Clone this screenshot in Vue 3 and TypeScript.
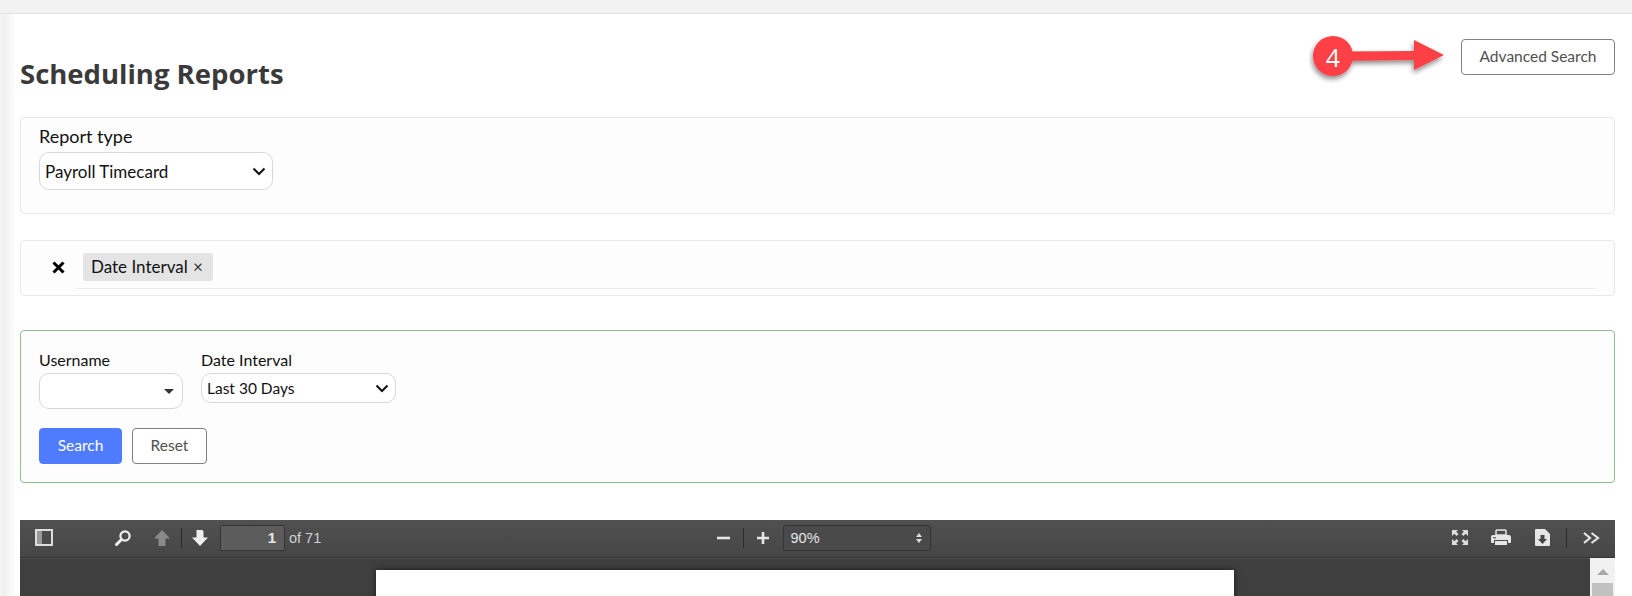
<script setup lang="ts">
import { ref } from 'vue';

const reportType = ref('Payroll Timecard');
const dateInterval = ref('Last 30 Days');
const pageNumber = ref(1);
const pageCount = 71;
</script>

<template>
  <div class="page">
    <div class="topbar"></div>
    <div class="content">
      <aside class="side-shadow"></aside>
      <main class="main">
        <header class="header">
          <h1>Scheduling Reports</h1>
          <button class="btn btn-outline advanced">Advanced Search</button>
          <div class="callout">
            <svg width="146" height="60" viewBox="0 0 146 60">
              <defs>
                <filter id="drop" x="-10%" y="-20%" width="125%" height="150%">
                  <feDropShadow dx="-1" dy="3" stdDeviation="2.5" flood-color="#000" flood-opacity=".45" />
                </filter>
              </defs>
              <g filter="url(#drop)" fill="#fd4044">
                <path d="M30 22.500 L105 22 V11 L135 26 L105 41 V31 L30 32 Z" />
                <circle cx="24" cy="27" r="20" />
              </g>
              <text x="24" y="38" text-anchor="middle" class="callout-num">4</text>
            </svg>
          </div>
        </header>

        <section class="card report-card">
          <label class="field-label large">Report type</label>
          <div class="select-wrap report-select">
            <select v-model="reportType">
              <option>Payroll Timecard</option>
            </select>
            <svg class="chevron" width="14" height="9" viewBox="0 0 14 9"><path d="M1.5 1.5 7 7l5.5-5.5" fill="none" stroke="#111" stroke-width="2" /></svg>
          </div>
        </section>

        <section class="card filter-card">
          <svg class="clear" width="13" height="13" viewBox="0 0 13 13"><path d="M1.500 1.500l10 10M11.500 1.500l-10 10" stroke="#000" stroke-width="3" /></svg>
          <div class="chip-line">
            <span class="chip">Date Interval <span class="chip-x">×</span></span>
          </div>
        </section>

        <section class="card search-card">
          <div class="search-fields">
            <div class="field">
              <label class="field-label">Username</label>
              <div class="combo"><i class="caret"></i></div>
            </div>
            <div class="field">
              <label class="field-label">Date Interval</label>
              <div class="select-wrap date-select">
                <select v-model="dateInterval">
                  <option>Last 30 Days</option>
                </select>
                <svg class="chevron" width="14" height="9" viewBox="0 0 14 9"><path d="M1.5 1.5 7 7l5.5-5.5" fill="none" stroke="#111" stroke-width="2" /></svg>
              </div>
            </div>
          </div>
          <div class="search-actions">
            <button class="btn btn-primary">Search</button>
            <button class="btn btn-outline">Reset</button>
          </div>
        </section>

        <section class="viewer">
          <div class="toolbar">
            <div class="tb-left">
              <svg class="tb-sidebar" width="18" height="17" viewBox="0 0 18 17">
                <rect x="1" y="1" width="16" height="15" fill="none" stroke="#ddd" stroke-width="2" />
                <rect x="2" y="2" width="5" height="13" fill="#999" />
              </svg>
              <svg class="tb-find" width="18" height="18" viewBox="0 0 18 18">
                <circle cx="11" cy="7" r="4.600" fill="none" stroke="#eee" stroke-width="2.200" />
                <path d="M7.500 10.500 2.500 15.500" stroke="#eee" stroke-width="3" stroke-linecap="round" />
              </svg>
              <svg class="tb-up" width="18" height="18" viewBox="0 0 18 18"><path d="M9 1 17 9.500h-4.500V17h-7V9.500H1z" fill="#8a8a8a" /></svg>
              <i class="tb-sep"></i>
              <svg class="tb-down" width="18" height="18" viewBox="0 0 18 18"><path d="M9 17 1 8.500h4.500V1h5c1.500 0 2 1 2 2v5.500H17z" fill="#eee" /></svg>
              <div class="page-input">{{ pageNumber }}</div>
              <span class="page-of">of {{ pageCount }}</span>
            </div>

            <div class="tb-center">
              <svg width="14" height="4" viewBox="0 0 14 4"><rect width="13" height="2.600" y=".7" fill="#e6e6e6" /></svg>
              <i class="tb-sep zoom-sep"></i>
              <svg width="14" height="14" viewBox="0 0 14 14"><path d="M7 1v12M1 7h12" stroke="#e6e6e6" stroke-width="2.600" /></svg>
              <div class="zoom-select">
                <span>90%</span>
                <svg width="6" height="10" viewBox="0 0 6 10"><path d="M3 0 6 4H0zM3 10 0 6h6z" fill="#ddd" /></svg>
              </div>
            </div>

            <div class="tb-right">
              <svg class="tb-full" width="18" height="17" viewBox="0 0 18 17">
                <path d="M1 1h6L5.200 2.800 7.500 5.100 5.600 7 3.300 4.700 1 7zM17 1v6l-2.300-2.300L12.400 7l-1.900-1.900 2.300-2.300L11 1zM1 16v-6l2.300 2.300L5.600 10l1.900 1.900-2.300 2.300L7 16zM17 16h-6l1.800-1.800-2.300-2.300 1.900-1.900 2.300 2.300L17 10z" fill="#ddd" />
              </svg>
              <svg class="tb-print" width="20" height="17" viewBox="0 0 20 17">
                <path d="M5 6V2q0-1 1-1h8q1 0 1 1v4z" fill="none" stroke="#e6e6e6" stroke-width="1.500" />
                <path d="M2 6h16q2 0 2 2v5q0 1-1 1h-2v-3H3v3H1q-1 0-1-1V8q0-2 2-2zM4 12h12v4H4z" fill="#e6e6e6" />
                <rect x="2" y="8" width="3" height="1.500" fill="#777" />
              </svg>
              <svg class="tb-save" width="15" height="17" viewBox="0 0 15 17">
                <path d="M0 1q0-1 1-1h9l5 5v11q0 1-1 1H1q-1 0-1-1z" fill="#e6e6e6" />
                <path d="M5.500 6h4v4H12l-4.500 5L3 10h2.500z" fill="#444" />
              </svg>
              <i class="tb-sep"></i>
              <svg class="tb-more" width="17" height="12" viewBox="0 0 17 12"><path d="M1 1 7 6 1 11M8.500 1l6.500 5-6.500 5" fill="none" stroke="#e6e6e6" stroke-width="2.200" /></svg>
            </div>
          </div>
          <div class="viewer-body">
            <div class="pdf-page"></div>
            <div class="scrollbar">
              <i class="scroll-arrow"></i>
              <div class="scroll-thumb"></div>
            </div>
          </div>
        </section>
      </main>
    </div>
  </div>
</template>

<style>
html,
body {
  margin: 0;
  height: 596px;
  overflow: hidden;
  background: #fff;
}
</style>

<style scoped>
.page {
  height: 596px;
  display: flex;
  flex-direction: column;
  font-family: Lato, "Liberation Sans", sans-serif;
  color: #111;
  overflow: hidden;
}

.topbar {
  height: 13px;
  flex: none;
  background: #f2f2f2;
  border-bottom: 1px solid #e2e2e2;
}

.content {
  flex: 1;
  display: flex;
  min-height: 0;
}

.side-shadow {
  width: 20px;
  flex: none;
  background: linear-gradient(to right, #f4f4f4 0, #efefef 3px, #f5f5f5 8px, #fff 16px);
}

.main {
  width: 1595px;
  flex: none;
}

.header {
  position: relative;
  height: 103px;
  display: flex;
  justify-content: space-between;
  align-items: flex-start;
}

h1 {
  margin: 42px 0 0;
  font-family: "Open Sans", sans-serif;
  font-size: 27.5px;
  line-height: 36px;
  font-weight: 700;
  color: #3a3a3a;
}

.callout {
  position: absolute;
  left: 1289px;
  top: 15px;
  line-height: 0;
}

.callout-num {
  font-family: "Open Sans", sans-serif;
  font-size: 25px;
  fill: #fff;
}

.btn {
  font-family: Lato, sans-serif;
  font-size: 15.5px;
  border-radius: 4px;
  height: 36px;
  padding: 0 0 2px;
  background: #fff;
  color: #505050;
  box-sizing: border-box;
}

.btn-outline {
  border: 1px solid #808080;
}

.btn-primary {
  border: 1px solid #4f7cff;
  background: #4f7cff;
  color: #fff;
  width: 83px;
}

.advanced {
  width: 154px;
  margin-top: 25px;
}

.card {
  box-sizing: border-box;
  background: #fdfdfd;
  border: 1px solid #e9e9e9;
  border-radius: 4px;
}

.report-card {
  height: 97px;
  padding: 7px 18px;
}

.field-label {
  display: block;
  font-size: 16px;
  line-height: 20px;
  color: #111;
}

.field-label.large {
  font-size: 18px;
  line-height: 22px;
}

.select-wrap {
  position: relative;
  line-height: 0;
}

.select-wrap select {
  appearance: none;
  width: 100%;
  box-sizing: border-box;
  height: 100%;
  padding: 0 0 0 5px;
  border: 1px solid #d8d8d8;
  border-radius: 10px;
  background: #fff;
  font-family: Lato, sans-serif;
  font-size: 17px;
  color: #111;
}

.date-select select {
  font-size: 15.5px;
}

.chevron {
  position: absolute;
  right: 7px;
  top: 50%;
  margin-top: -4px;
}

.report-select {
  width: 234px;
  height: 38px;
  margin-top: 5px;
}

.filter-card {
  height: 56px;
  margin-top: 26px;
  display: flex;
  padding: 12px 19px 6px 31px;
}

.clear {
  margin: 8px 0 0;
  flex: none;
}

.chip-line {
  flex: 1;
  margin-left: 12px;
  padding-left: 6px;
  border-bottom: 1px solid #e9e9e9;
}

.chip {
  display: inline-block;
  box-sizing: border-box;
  width: 130px;
  height: 28px;
  line-height: 28px;
  padding-left: 8px;
  background: #e4e4e4;
  border-radius: 3px;
  font-size: 17px;
  color: #111;
}

.chip-x {
  font-size: 17px;
  margin-left: 1px;
  color: #333;
}

.search-card {
  height: 153px;
  margin-top: 34px;
  border-color: #8fbf8f;
  padding: 19px 18px;
}

.search-fields {
  display: flex;
  gap: 18px;
  align-items: flex-start;
}

.combo {
  position: relative;
  box-sizing: border-box;
  width: 144px;
  height: 36px;
  margin-top: 3px;
  background: #fff;
  border: 1px solid #d8d8d8;
  border-radius: 10px;
}

.caret {
  position: absolute;
  right: 8px;
  top: 15px;
  border-left: 5px solid transparent;
  border-right: 5px solid transparent;
  border-top: 5px solid #333;
}

.date-select {
  width: 195px;
  height: 30px;
  margin-top: 3px;
}

.search-actions {
  position: relative;
  top: 19px;
  display: flex;
  gap: 10px;
}

.search-actions .btn-outline {
  width: 75px;
}

.viewer {
  margin-top: 37px;
  height: 77px;
  background: #3f3f3f;
  overflow: hidden;
}

.toolbar {
  box-sizing: border-box;
  height: 38px;
  padding-bottom: 2px;
  display: grid;
  grid-template-columns: 1fr auto 1fr;
  align-items: center;
  background: linear-gradient(#505050, #464646);
  border-bottom: 1px solid #363636;
  box-shadow: 0 1px 0 #4c4c4c;
  color: #ddd;
  font-family: "Liberation Sans", Arial, sans-serif;
}

.tb-left,
.tb-center,
.tb-right {
  display: flex;
  align-items: center;
}

.tb-left {
  padding-left: 15px;
}

.tb-find {
  margin-left: 61px;
}

.tb-up {
  margin-left: 21px;
}

.tb-sep {
  display: block;
  width: 1px;
  height: 20px;
  background: #2a2a2a;
}

.tb-left .tb-sep {
  margin: 0 10px 0 10px;
}

.tb-down {
  margin-left: -1px;
}

.page-input {
  box-sizing: border-box;
  width: 65px;
  height: 26px;
  margin-left: 11px;
  padding-right: 8px;
  text-align: right;
  line-height: 24px;
  font-size: 15px;
  font-weight: 700;
  color: #e6e6e6;
  background: #5c5c5c;
  border: 1px solid #333;
  border-radius: 2px;
}

.page-of {
  margin-left: 4px;
  font-size: 14.5px;
  color: #d0d0d0;
}

.tb-center {
  padding-left: 12px;
}

.zoom-sep {
  margin: 0 12px;
}

.zoom-select {
  box-sizing: border-box;
  width: 148px;
  height: 26px;
  margin-left: 13px;
  padding: 0 8px 0 7px;
  display: flex;
  align-items: center;
  justify-content: space-between;
  font-size: 14.5px;
  color: #e6e6e6;
  background: #4a4a4a;
  border: 1px solid #333;
  border-radius: 2px;
}

.tb-right {
  justify-content: flex-end;
  padding-right: 15px;
}

.tb-print {
  margin-left: 22px;
}

.tb-save {
  margin-left: 24px;
}

.tb-right .tb-sep {
  margin: 0 16px;
}

.viewer-body {
  position: relative;
  height: 39px;
  display: flex;
  justify-content: flex-start;
}

.pdf-page {
  width: 858px;
  height: 40px;
  margin: 12px 0 0 356px;
  background: #fff;
  box-shadow: 0 0 6px rgba(0, 0, 0, 0.6);
}

.scrollbar {
  position: absolute;
  right: 0;
  top: 0;
  bottom: 0;
  width: 25px;
  background: #f1f1f1;
  display: flex;
  flex-direction: column;
  align-items: center;
}

.scroll-arrow {
  margin-top: 11px;
  border-left: 6px solid transparent;
  border-right: 6px solid transparent;
  border-bottom: 6px solid #a8a8a8;
}

.scroll-thumb {
  width: 21px;
  margin-top: 8px;
  flex: 1;
  background: #c1c1c1;
}
</style>
